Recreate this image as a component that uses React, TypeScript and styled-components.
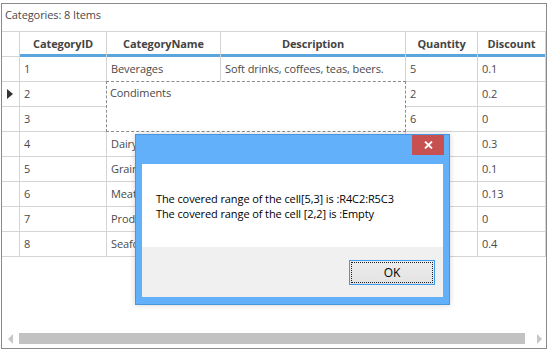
import React from "react";
import styled, { createGlobalStyle } from "styled-components";

const GlobalStyle = createGlobalStyle`
  html, body {
    margin: 0;
    padding: 0;
    background: #ffffff;
  }
  body {
    font-family: "Segoe UI", "Open Sans", "Noto Sans", sans-serif;
    font-size: 11px;
    letter-spacing: -0.1px;
  }
`;

interface Category {
  id: number;
  name: string;
  description: string;
  quantity: string;
  discount: string;
}

// rows 4-8 sit under the message box, only the start of the name shows
const categories: Category[] = [
  { id: 1, name: "Beverages", description: "Soft drinks, coffees, teas, beers.", quantity: "5", discount: "0.1" },
  { id: 2, name: "Condiments", description: "", quantity: "2", discount: "0.2" },
  { id: 3, name: "", description: "", quantity: "6", discount: "0" },
  { id: 4, name: "Dairy Products", description: "", quantity: "", discount: "0.3" },
  { id: 5, name: "Grains/Cereals", description: "", quantity: "", discount: "0.1" },
  { id: 6, name: "Meat/Poultry", description: "", quantity: "", discount: "0.13" },
  { id: 7, name: "Produce", description: "", quantity: "", discount: "0" },
  { id: 8, name: "Seafood", description: "", quantity: "", discount: "0.4" },
];

const columns = ["CategoryID", "CategoryName", "Description", "Quantity", "Discount"];

const Frame = styled.div`
  box-sizing: border-box;
  margin: 3px 0 0 1px;
  width: 546px;
  height: 346px;
  border: 1px solid #8a8a8a;
  display: flex;
  flex-direction: column;
  background: #ffffff;
`;

const Caption = styled.div`
  height: 27px;
  box-sizing: border-box;
  display: flex;
  align-items: center;
  padding: 0 0 7px 3px;
  color: #4a4a4a;
`;

const Grid = styled.div`
  display: grid;
  grid-template-columns: 18px 87px 114px 185px 72px 68px;
  grid-template-rows: 25px repeat(8, 25px);
  border-top: 1px solid #d4d4d4;
`;

const BaseCell = styled.div`
  box-sizing: border-box;
  border-right: 1px solid #d4d4d4;
  border-bottom: 1px solid #d4d4d4;
  display: flex;
  align-items: center;
  overflow: hidden;
  white-space: nowrap;
`;

const CornerCell = styled(BaseCell)``;

const HeaderCell = styled(BaseCell)`
  justify-content: center;
  border-bottom: none;
  box-shadow: inset 0 -3px 0 #5aa5dc;
  padding-bottom: 3px;
  font-weight: 700;
  color: #444444;
`;

const RowHeaderCell = styled(BaseCell)`
  padding-left: 5px;
`;

const Cell = styled(BaseCell)`
  padding: 0 4px 1px 4px;
  color: #4a4a4a;
`;

const CoveredCell = styled.div`
  box-sizing: border-box;
  grid-column: 3 / 5;
  grid-row: 3 / 5;
  margin: -1px 0 0 -1px;
  border: 1px dashed #8c8c8c;
  padding: 3px 3px;
  color: #4a4a4a;
  background: #ffffff;
`;

const CurrentRowArrow = styled.span`
  width: 0;
  height: 0;
  border-top: 5px solid transparent;
  border-bottom: 5px solid transparent;
  border-left: 6px solid #333333;
`;

const Filler = styled.div`
  flex: 1;
`;

const ScrollBar = styled.div`
  height: 11px;
  margin-bottom: 4px;
  display: flex;
  align-items: center;
  padding: 0 4px 0 6px;
  gap: 6px;
`;

const ScrollArrow = styled.span<{ $dir: "left" | "right" }>`
  width: 0;
  height: 0;
  border-top: 5px solid transparent;
  border-bottom: 5px solid transparent;
  ${(p) => (p.$dir === "left" ? "border-right: 5px solid #c8c8c8;" : "border-left: 5px solid #c8c8c8;")}
`;

const ScrollThumb = styled.div`
  flex: 1;
  height: 11px;
  background: #c2c2c2;
  margin-right: 6px;
`;

const Dialog = styled.div`
  position: absolute;
  left: 135px;
  top: 134px;
  box-sizing: border-box;
  width: 315px;
  height: 171px;
  border: 1px solid #4a96dc;
  background: #63b0fa;
  padding: 0 6px 7px 6px;
  display: flex;
  flex-direction: column;
  box-shadow: 0 0 6px rgba(0, 0, 0, 0.18);
`;

const TitleBar = styled.div`
  height: 29px;
  display: flex;
  justify-content: flex-end;
  align-items: flex-start;
  margin-right: -1px;
`;

const CloseButton = styled.div`
  width: 32px;
  height: 20px;
  background: #c75050;
  display: flex;
  align-items: center;
  justify-content: center;
`;

const ClientArea = styled.div`
  flex: 1;
  display: flex;
  flex-direction: column;
  background: #ffffff;
`;

const Message = styled.div`
  height: 83px;
  box-sizing: border-box;
  padding: 27px 0 0 14px;
  color: #000000;
  font-size: 11px;
  line-height: 15px;
`;

const Footer = styled.div`
  flex: 1;
  background: #f0f0f0;
  display: flex;
  justify-content: flex-end;
  align-items: flex-start;
  padding: 13px 8px 0 0;
`;

const OkButton = styled.button`
  box-sizing: border-box;
  width: 86px;
  height: 25px;
  border: 1px solid #3c9bf0;
  background: linear-gradient(#ededed, #e3e3e3);
  padding: 1px;
  font-family: inherit;
  font-size: 12px;
  color: #000000;
  display: flex;
`;

const FocusRect = styled.span`
  flex: 1;
  border: 1px dotted #222222;
  display: flex;
  align-items: center;
  justify-content: center;
`;

export default function App() {
  return (
    <>
      <GlobalStyle />
      <Frame>
        <Caption>Categories: 8 Items</Caption>
        <Grid>
          <CornerCell />
          {columns.map((c) => (
            <HeaderCell key={c}>{c}</HeaderCell>
          ))}
          {categories.map((row) => {
            const covered = row.id === 2 || row.id === 3;
            return (
              <React.Fragment key={row.id}>
                <RowHeaderCell>{row.id === 2 && <CurrentRowArrow />}</RowHeaderCell>
                <Cell>{row.id}</Cell>
                {!covered && <Cell>{row.name}</Cell>}
                {!covered && <Cell>{row.description}</Cell>}
                <Cell>{row.quantity}</Cell>
                <Cell>{row.discount}</Cell>
              </React.Fragment>
            );
          })}
          <CoveredCell>Condiments</CoveredCell>
        </Grid>
        <Filler />
        <ScrollBar>
          <ScrollArrow $dir="left" />
          <ScrollThumb />
          <ScrollArrow $dir="right" />
        </ScrollBar>
      </Frame>

      <Dialog>
        <TitleBar>
          <CloseButton>
            <svg width="9" height="8" viewBox="0 0 9 8">
              <path d="M1 0.5 L8 7.5 M8 0.5 L1 7.5" stroke="#ffffff" strokeWidth="1.8" />
            </svg>
          </CloseButton>
        </TitleBar>
        <ClientArea>
          <Message>
            The covered range of the cell[5,3] is :R4C2:R5C3
            <br />
            The covered range of the cell [2,2] is :Empty
          </Message>
          <Footer>
            <OkButton>
              <FocusRect>OK</FocusRect>
            </OkButton>
          </Footer>
        </ClientArea>
      </Dialog>
    </>
  );
}
